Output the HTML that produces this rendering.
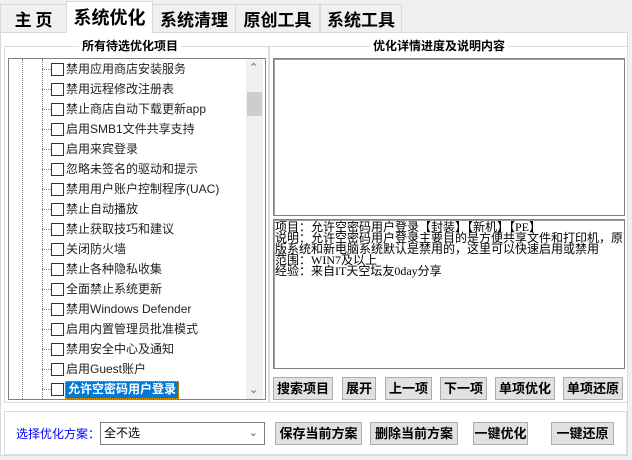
<!DOCTYPE html>
<html><head><meta charset="utf-8"><style>
*{margin:0;padding:0;box-sizing:border-box}
body{width:632px;height:460px;background:#f0f0f0;position:relative;overflow:hidden;font-family:"Liberation Sans","Noto Sans CJK SC",sans-serif;font-size:12px;color:#000}
.a{position:absolute}
.tab{position:absolute;top:4px;height:28px;border:1px solid #d9d9d9;border-bottom:none;background:#f0f0f0;font-size:17px;font-weight:bold;text-align:center;line-height:27px;font-family:"Noto Sans CJK SC",sans-serif}
.panel{position:absolute;left:0;top:32px;width:628px;height:424px;background:#fff;border:1px solid #d9d9d9}
.gb{position:absolute;border:1px solid #dcdcdc}
.gt{position:absolute;background:#fff;font-weight:bold;font-size:12px;padding:0 3px;line-height:14px}
.btn{position:absolute;height:23px;background:#e1e1e1;border:1px solid #adadad;font-weight:bold;font-size:13px;text-align:center;line-height:21px}
.item{position:absolute;left:36px;height:20px;line-height:18px;font-size:12px}
.item .d{position:absolute;left:6px;top:9px;width:9px;border-top:1px dotted #808080}
.item .c{position:absolute;left:15px;top:3px;width:13px;height:13px;border:1px solid #333;background:#fff}
.item .t{position:absolute;left:30px;top:0;white-space:nowrap;color:#222}
.ta{position:absolute;background:#fff;border:1px solid #828282;box-shadow:inset 1px 1px 0 #a0a0a0}
</style></head><body>
<div class="tab" style="left:0;width:67px">主 页</div>
<div class="tab" style="left:152px;width:84px">系统清理</div>
<div class="tab" style="left:235px;width:85px">原创工具</div>
<div class="tab" style="left:320px;width:82px">系统工具</div>
<div class="panel"></div>
<div class="tab" style="left:66px;top:1px;height:32px;width:87px;background:#fff;font-size:18px;line-height:30px">系统优化</div>

<div class="gb" style="left:4px;top:46px;width:265px;height:357px"></div>
<div class="gt" style="left:79px;top:39px">所有待选优化项目</div>
<div class="gb" style="left:269px;top:46px;width:359px;height:357px"></div>
<div class="gt" style="left:370px;top:39px">优化详情进度及说明内容</div>

<div class="a" style="left:8px;top:58px;width:258px;height:342px;border:1px solid #828282;background:#fff"></div>
<div class="a" style="left:22px;top:59px;height:340px;border-left:1px dotted #808080"></div>
<div class="a" style="left:42px;top:59px;height:340px;border-left:1px dotted #808080"></div>
<div class="a" style="left:246px;top:59px;width:17px;height:340px;background:#f0f0f0"></div>
<div class="a" style="left:247px;top:92px;width:15px;height:24px;background:#cdcdcd"></div>
<div class="a" style="left:249px;top:61px;font-size:11px;color:#606060">&#8963;</div>
<div class="a" style="left:249px;top:383px;font-size:11px;color:#606060">&#8964;</div>

<div class="item" style="top:60px"><div class="d"></div><div class="c"></div><div class="t">禁用应用商店安装服务</div></div>
<div class="item" style="top:80px"><div class="d"></div><div class="c"></div><div class="t">禁用远程修改注册表</div></div>
<div class="item" style="top:100px"><div class="d"></div><div class="c"></div><div class="t">禁止商店自动下载更新app</div></div>
<div class="item" style="top:120px"><div class="d"></div><div class="c"></div><div class="t">启用SMB1文件共享支持</div></div>
<div class="item" style="top:140px"><div class="d"></div><div class="c"></div><div class="t">启用来宾登录</div></div>
<div class="item" style="top:160px"><div class="d"></div><div class="c"></div><div class="t">忽略未签名的驱动和提示</div></div>
<div class="item" style="top:180px"><div class="d"></div><div class="c"></div><div class="t">禁用用户账户控制程序(UAC)</div></div>
<div class="item" style="top:200px"><div class="d"></div><div class="c"></div><div class="t">禁止自动播放</div></div>
<div class="item" style="top:220px"><div class="d"></div><div class="c"></div><div class="t">禁止获取技巧和建议</div></div>
<div class="item" style="top:240px"><div class="d"></div><div class="c"></div><div class="t">关闭防火墙</div></div>
<div class="item" style="top:260px"><div class="d"></div><div class="c"></div><div class="t">禁止各种隐私收集</div></div>
<div class="item" style="top:280px"><div class="d"></div><div class="c"></div><div class="t">全面禁止系统更新</div></div>
<div class="item" style="top:300px"><div class="d"></div><div class="c"></div><div class="t">禁用Windows Defender</div></div>
<div class="item" style="top:320px"><div class="d"></div><div class="c"></div><div class="t">启用内置管理员批准模式</div></div>
<div class="item" style="top:340px"><div class="d"></div><div class="c"></div><div class="t">禁用安全中心及通知</div></div>
<div class="item" style="top:360px"><div class="d"></div><div class="c"></div><div class="t">启用Guest账户</div></div>
<div class="item" style="top:380px"><div class="d"></div><div class="c"></div><div class="t" style="left:29px;top:1px;height:18px;background:#0078d7;color:#fff;font-weight:bold;padding:0 2px;border:1px dotted #f0a000;line-height:15px">允许空密码用户登录</div></div>

<div class="ta" style="left:273px;top:58px;width:352px;height:158px"></div>
<div class="ta" style="left:273px;top:219px;width:352px;height:150px;padding:2px 1px;font-size:12px;line-height:11px;font-family:'Liberation Serif','Noto Sans CJK SC',serif">项目：允许空密码用户登录【封装】【新机】【PE】<br>说明：允许空密码用户登录主要目的是方便共享文件和打印机，原版系统和新电脑系统默认是禁用的，这里可以快速启用或禁用<br>范围：WIN7及以上<br>经验：来自IT天空坛友0day分享</div>

<div class="btn" style="left:273px;top:377px;width:60px">搜索项目</div>
<div class="btn" style="left:342px;top:377px;width:34px">展开</div>
<div class="btn" style="left:385px;top:377px;width:47px">上一项</div>
<div class="btn" style="left:440px;top:377px;width:47px">下一项</div>
<div class="btn" style="left:495px;top:377px;width:60px">单项优化</div>
<div class="btn" style="left:563px;top:377px;width:60px">单项还原</div>

<div class="gb" style="left:4px;top:411px;width:623px;height:44px"></div>
<div class="a" style="left:16px;top:425px;color:#0000ff;font-size:12px">选择优化方案：</div>
<div class="a" style="left:100px;top:422px;width:165px;height:23px;border:1px solid #7a7a7a;background:#fff;padding-left:3px;line-height:21px">全不选<span style="position:absolute;right:6px;top:0;color:#555;font-size:11px">&#8964;</span></div>
<div class="btn" style="left:275px;top:422px;width:87px">保存当前方案</div>
<div class="btn" style="left:370px;top:422px;width:88px">删除当前方案</div>
<div class="btn" style="left:473px;top:422px;width:55px">一键优化</div>
<div class="btn" style="left:551px;top:422px;width:63px">一键还原</div>
</body></html>
